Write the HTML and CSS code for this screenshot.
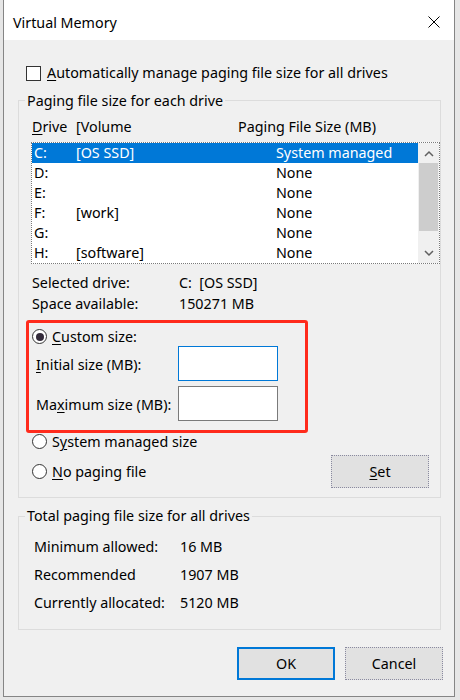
FILE: index.html
```html
<!DOCTYPE html>
<html>
<head>
<meta charset="utf-8">
<title>Virtual Memory</title>
<link rel="stylesheet" href="styles.css">
</head>
<body>
<div class="window">
  <div class="titlebar">
    <span class="title">Virtual Memory</span>
    <svg class="close" width="12" height="12" viewBox="0 0 12 12"><path d="M0.5 0.5 L11.5 11.5 M11.5 0.5 L0.5 11.5" stroke="#000" stroke-width="1" fill="none"/></svg>
  </div>
  <div class="content">
    <div class="check-row"><span class="checkbox"></span><span><u>A</u>utomatically manage paging file size for all drives</span></div>

    <div class="group group-drives">
      <div class="legend">Paging file size for each drive</div>
      <div class="list-header"><span><u>D</u>rive</span><span>[Volume</span><span>Paging File Size (MB)</span></div>
      <div class="listbox">
        <div class="rows">
          <div class="row selected"><span>C:</span><span>[OS SSD]</span><span>System managed</span></div>
          <div class="row"><span>D:</span><span></span><span>None</span></div>
          <div class="row"><span>E:</span><span></span><span>None</span></div>
          <div class="row"><span>F:</span><span>[work]</span><span>None</span></div>
          <div class="row"><span>G:</span><span></span><span>None</span></div>
          <div class="row"><span>H:</span><span>[software]</span><span>None</span></div>
        </div>
        <div class="scrollbar">
          <div class="sb-btn"><svg width="10" height="7" viewBox="0 0 10 7"><path d="M1 6 L5 2 L9 6" stroke="#606060" stroke-width="1.5" fill="none"/></svg></div>
          <div class="sb-track"><div class="sb-thumb"></div></div>
          <div class="sb-btn"><svg width="10" height="7" viewBox="0 0 10 7"><path d="M1 1 L5 5 L9 1" stroke="#606060" stroke-width="1.5" fill="none"/></svg></div>
        </div>
      </div>
      <div class="info">
        <span>Selected drive:</span><span>C:&nbsp; [OS SSD]</span>
        <span>Space available:</span><span>150271 MB</span>
      </div>
      <div class="radio-row custom-row"><span class="radio checked"></span><span><u>C</u>ustom size:</span></div>
      <div class="input-row first"><span class="input-label"><u>I</u>nitial size (MB):</span><span class="textbox focused"></span></div>
      <div class="input-row second"><span class="input-label">Ma<u>x</u>imum size (MB):</span><span class="textbox"></span></div>
      <div class="radio-row system-row"><span class="radio"></span><span>S<u>y</u>stem managed size</span></div>
      <div class="nopaging-row">
        <div class="radio-row"><span class="radio"></span><span><u>N</u>o paging file</span></div>
        <div class="button dotted"><u>S</u>et</div>
      </div>
    </div>

    <div class="group group-total">
      <div class="legend">Total paging file size for all drives</div>
      <div class="totals">
        <span>Minimum allowed:</span><span>16 MB</span>
        <span>Recommended</span><span>1907 MB</span>
        <span>Currently allocated:</span><span>5120 MB</span>
      </div>
    </div>

    <div class="buttons">
      <div class="button default">OK</div>
      <div class="button dotted">Cancel</div>
    </div>
  </div>
  <div class="highlight-box"></div>
</div>
</body>
</html>
```
FILE: styles.css
```css
* { box-sizing: border-box; }
html, body { margin: 0; padding: 0; }
body {
  width: 460px;
  height: 700px;
  overflow: hidden;
  background: #e6e6e6;
  font-family: "Noto Sans", "Open Sans", sans-serif;
  font-size: 14.3px;
  line-height: 20px;
  color: #000;
}
u { text-decoration: underline; text-decoration-thickness: 1px; text-underline-offset: 2px; }

.window {
  position: relative;
  margin-left: 3px;
  width: 452px;
  height: 697px;
  border: 1px solid #858585;
  border-top: none;
  background: #f0f0f0;
  display: flex;
  flex-direction: column;
}
.titlebar {
  height: 40px;
  background: #fff;
  display: flex;
  align-items: flex-start;
  justify-content: space-between;
  padding: 0 14px 0 9px;
}
.title { font-size: 14.3px; line-height: 20px; margin-top: 13px; }
.close { margin-top: 16px; }

.content { flex: 1; padding-left: 14px; }

.check-row {
  margin-top: 23px;
  padding-left: 8px;
  height: 20px;
  display: flex;
  align-items: center;
  gap: 6px;
}
.checkbox {
  width: 15px; height: 15px;
  border: 1px solid #333;
  background: #fff;
}

.group {
  width: 423px;
  border: 1px solid #dcdcdc;
}
.group-drives { margin-top: 17px; height: 398px; }
.group-total { margin-top: 18px; height: 114px; }
.legend {
  width: fit-content;
  margin-left: 6px;
  padding: 0 2px;
  background: #f0f0f0;
}
.group-drives .legend { margin-top: -10px; }
.group-total .legend { margin-top: -11px; }

.list-header {
  margin-top: 6px;
  padding-left: 13px;
  display: grid;
  grid-template-columns: 44px 162px auto;
  height: 20px;
}

.listbox {
  margin-top: 5px;
  margin-left: 12px;
  width: 409px;
  height: 122px;
  border: 1px dotted #7a7a7a;
  background: #fff;
  display: flex;
}
.rows { flex: 1; }
.row {
  height: 20px;
  display: grid;
  grid-template-columns: 42px 200px auto;
  padding-left: 2px;
  white-space: nowrap;
}
.row.selected { background: #0078d7; color: #fff; }
.scrollbar {
  width: 21px;
  background: #f0f0f0;
  display: flex;
  flex-direction: column;
}
.sb-btn {
  height: 20px;
  display: flex;
  align-items: center;
  justify-content: center;
}
.sb-track { flex: 1; padding: 0 1px; }
.sb-thumb { height: 68px; background: #cdcdcd; }

.info {
  margin-top: 9px;
  padding-left: 13px;
  display: grid;
  grid-template-columns: 147px auto;
  grid-auto-rows: 20px;
  row-gap: 1px;
}

.radio-row {
  display: flex;
  align-items: flex-start;
  gap: 5px;
  height: 20px;
}
.radio {
  width: 15px; height: 15px;
  margin-top: 2px;
  border: 1px solid #333;
  border-radius: 50%;
  background: #fff;
  display: flex;
  align-items: center;
  justify-content: center;
}
.radio.checked::after {
  content: "";
  width: 8px; height: 8px;
  border-radius: 50%;
  background: #332b3a;
}
.custom-row { margin-top: 13px; padding-left: 13px; height: 19px; }

.input-row {
  height: 35px;
  padding-left: 17px;
  display: flex;
  align-items: flex-start;
}
.input-row.second { margin-top: 5px; }
.input-label { width: 142px; margin-top: 9px; white-space: nowrap; }
.textbox {
  width: 100px; height: 35px;
  background: #fff;
  border: 1px solid #7a7a7a;
}
.textbox.focused { border-color: #0078d7; }

.system-row { margin-top: 11px; padding-left: 13px; }

.nopaging-row {
  margin-top: 3px;
  height: 33px;
  padding-left: 13px;
  padding-right: 11px;
  display: flex;
  align-items: center;
  justify-content: space-between;
}

.button {
  width: 98px; height: 33px;
  background: #e1e1e1;
  display: flex;
  align-items: center;
  justify-content: center;
}
.button.dotted { border: 1px dotted #8a8aa0; }
.button.default { border: 2px solid #0078d7; }

.totals {
  margin-top: 11px;
  padding-left: 15px;
  display: grid;
  grid-template-columns: 146px auto;
  grid-auto-rows: 20px;
  row-gap: 8px;
}

.buttons {
  margin-top: 17px;
  padding-right: 11px;
  display: flex;
  justify-content: flex-end;
  gap: 10px;
}

.highlight-box {
  position: absolute;
  left: 22px;
  top: 320px;
  width: 282px;
  height: 113px;
  border: 3px solid #ff2b1c;
  border-radius: 3px;
}
```
